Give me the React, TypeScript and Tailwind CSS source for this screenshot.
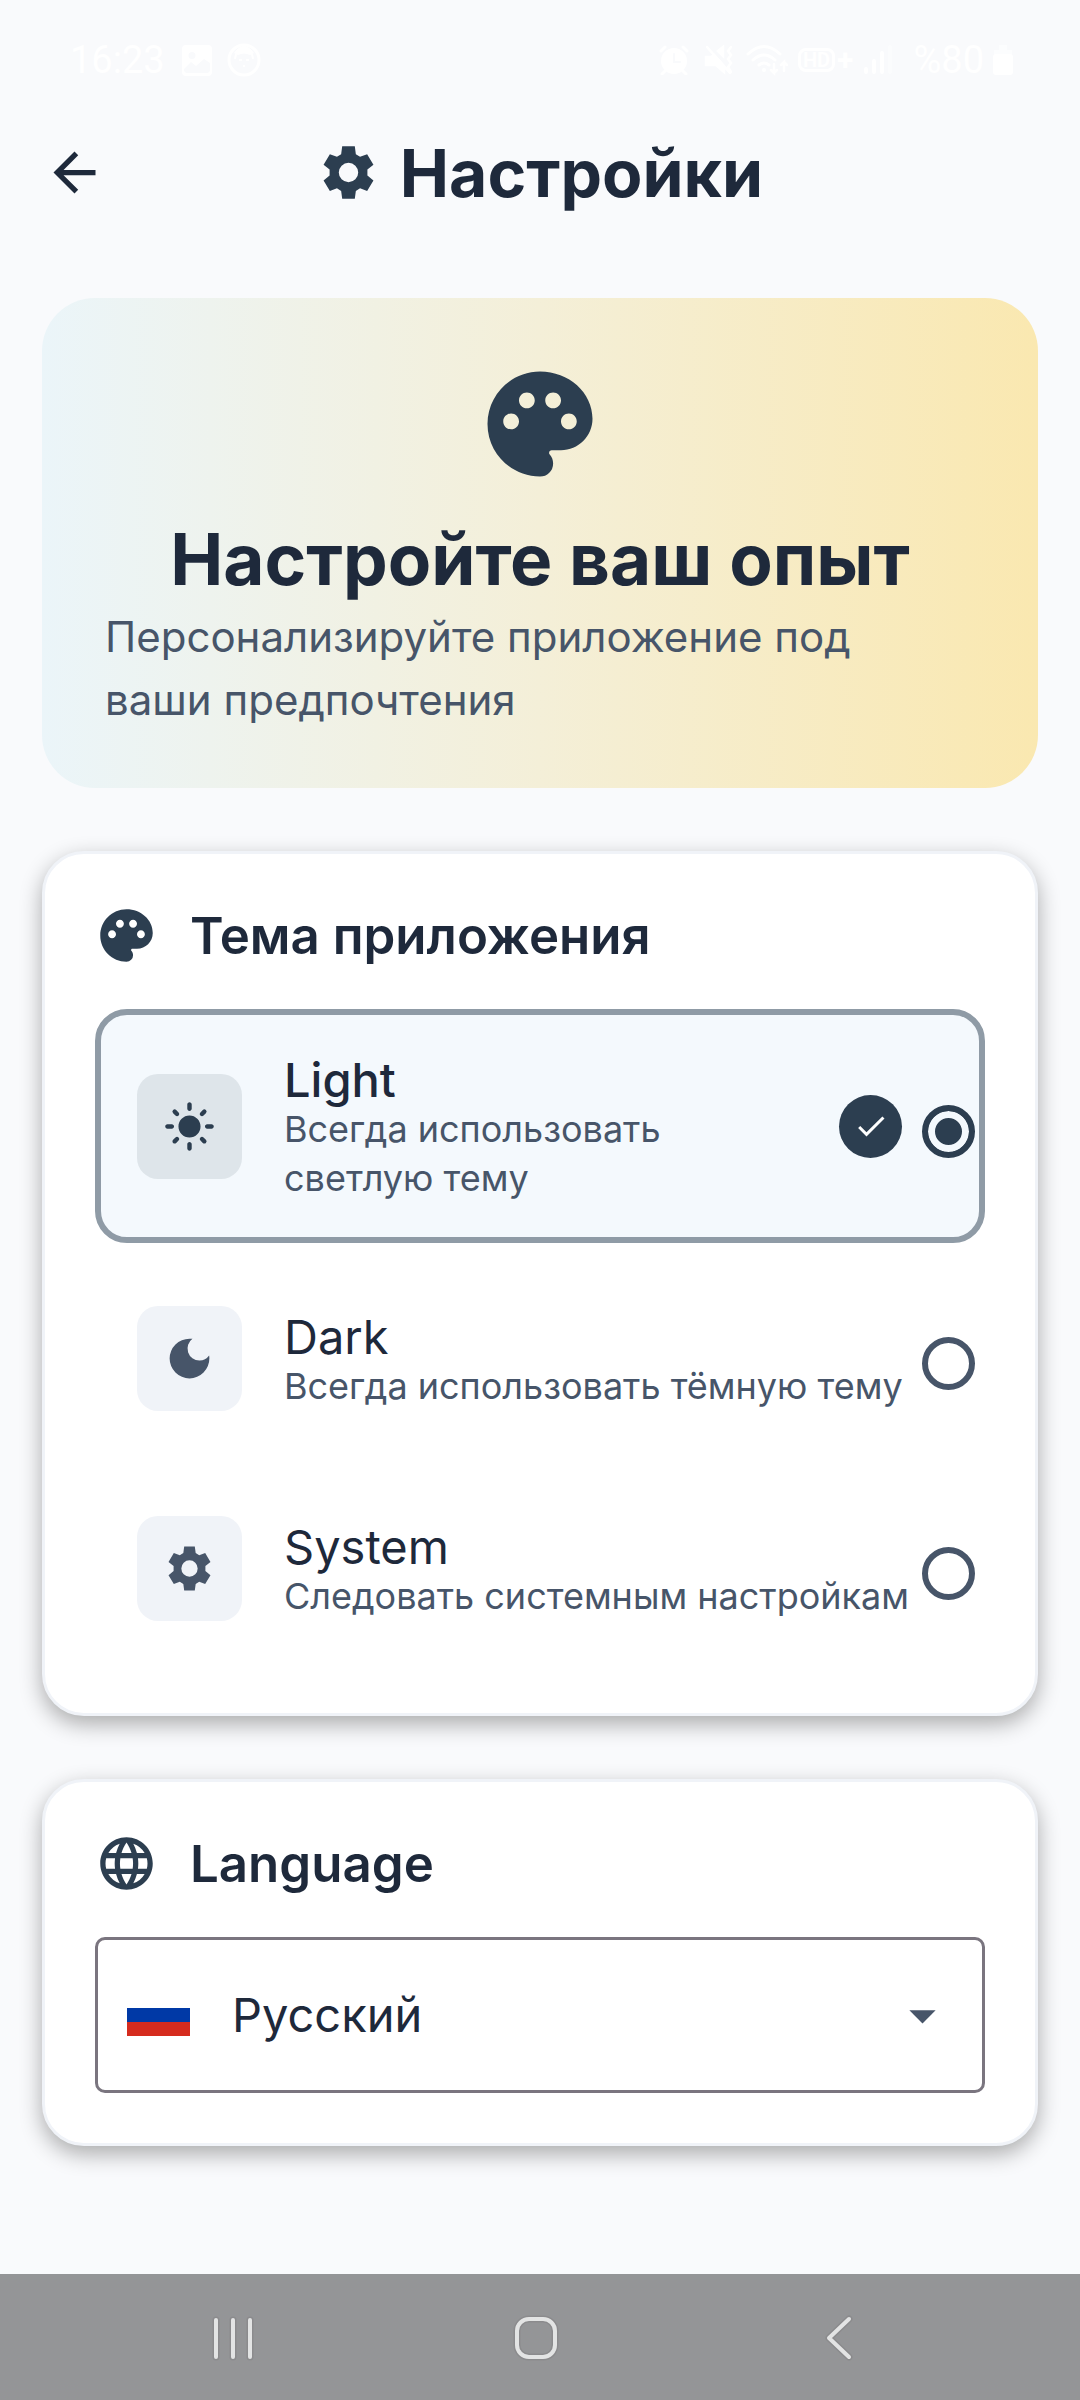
import { useState } from "react";
import type { ReactNode } from "react";
import {
  MdArrowDropDown,
  MdCheck,
  MdDarkMode,
  MdLanguage,
  MdLightMode,
  MdPalette,
} from "react-icons/md";

function Gear({ className }: { className: string }) {
  return (
    <svg viewBox="0 0 24 24" className={className} fill="currentColor" aria-hidden="true">
      <path
        fillRule="evenodd"
        d="M9.600 2L14.400 2L14.800 5L16.400 6L19.100 5L21.500 9L19.200 10.900L19.200 13.100L21.500 15L19.100 19L16.400 18L14.800 19L14.400 22L9.600 22L9.200 19L7.600 18L4.900 19L2.500 15L4.800 13.100L4.800 10.900L2.500 9L4.900 5L7.600 6L9.200 5zM12 8.300a3.700 3.700 0 1 0 0 7.400 3.700 3.700 0 0 0 0-7.400z"
      />
    </svg>
  );
}

function StatusBar() {
  return (
    <div className="flex h-[120px] items-center justify-between pl-[70px] pr-[66px] font-['Roboto',sans-serif] text-[38px] leading-none text-white">
      <div className="flex items-center">
        <span>16:23</span>
        <svg className="ml-4 h-8 w-8" viewBox="0 0 32 32" fill="none" aria-hidden="true">
          <path fillRule="evenodd" fill="currentColor" d="M5 1h22a4 4 0 0 1 4 4v23a4 4 0 0 1-4 4H5a4 4 0 0 1-4-4V5a4 4 0 0 1 4-4zM11 8a3.500 3.500 0 1 0 0 7 3.500 3.500 0 0 0 0-7zM3 25v2l2 2h22l2-2v-8l-6-4-8 7-5-4z" />
        </svg>
        <svg className="ml-3.5 h-[34px] w-[34px]" viewBox="0 0 34 34" fill="none" stroke="currentColor" strokeWidth="3" aria-hidden="true">
          <circle cx="17" cy="17" r="15" />
          <path fill="currentColor" stroke="none" d="M7 10Q17-4 27 10l-4 2q-6-3-12 0z" />
          <path strokeWidth="2" d="M8 16l1-5M26 16l-1-5M12 17h3M19 17h3M16 23h2" />
        </svg>
      </div>
      <div className="flex items-center">
        <svg className="h-[30px] w-[30px]" viewBox="0 0 30 30" fill="none" stroke="currentColor" strokeWidth="3" strokeLinecap="round" aria-hidden="true">
          <circle cx="15" cy="16" r="13" fill="currentColor" stroke="none" />
          <path d="M2 6l4-4M28 6l-4-4M6 26l-3 3M24 26l3 3" />
          <path stroke="#f9fafc" strokeWidth="2" d="M15 9v8h6" />
        </svg>
        <svg className="ml-[15px] h-[30px] w-[30px]" viewBox="0 0 30 30" fill="none" stroke="currentColor" strokeWidth="2.500" strokeLinecap="round" aria-hidden="true">
          <path fill="currentColor" d="M2 12h5l3-2 10 11v6l-8-7H2zM14 6l5-4v9z" />
          <path d="M3 2l23 26M27 2l-3 4 3 4-3 4 3 4-3 4 3 5" />
        </svg>
        <svg className="ml-3 h-8 w-[42px]" viewBox="0 0 42 32" fill="none" stroke="currentColor" strokeWidth="3" strokeLinecap="round" aria-hidden="true">
          <path d="M2 10Q18-5 34 10M7 16q11-10 22 0M13 21q5-4 10 0" />
          <circle cx="18" cy="26" r="2" fill="currentColor" stroke="none" />
          <path strokeWidth="2.500" d="M28 20v9l-3-3M28 29l3-3M38 27v-9l-3 3M38 18l3 3" />
        </svg>
        <span className="ml-2.5 flex h-6 items-center rounded-lg border-3 border-white px-0.5 text-[20px] font-bold leading-none">HD</span>
        <span className="ml-0.5 text-[30px] font-bold leading-none">+</span>
        <svg className="ml-2.5 h-[30px] w-[30px]" viewBox="0 0 30 30" stroke="currentColor" strokeWidth="4" strokeLinecap="round" aria-hidden="true">
          <path d="M3 24v3M11 16v11M19 8v19" />
          <path opacity=".4" d="M27 2v25" />
        </svg>
        <span className="ml-5">%80</span>
        <svg className="ml-2 h-[30px] w-[22px]" viewBox="0 0 22 30" fill="currentColor" aria-hidden="true">
          <path opacity=".5" d="M7 0h8v5h5v5H2V5h5z" />
          <rect x="1" y="9" width="20" height="21" rx="3" />
        </svg>
      </div>
    </div>
  );
}

function Card({ icon, title, children }: { icon: ReactNode; title: string; children: ReactNode }) {
  return (
    <section className="rounded-[42px] border-3 border-[#f0f3f8] bg-white p-[50px] shadow-[0_8px_22px_rgba(0,0,0,0.32)]">
      <h2 className="mb-[42px] flex h-[63px] items-center gap-8 text-[51px] font-semibold leading-none text-[#1e293b]">
        <span className="text-[#2c3e50]">{icon}</span>
        {title}
      </h2>
      {children}
    </section>
  );
}

const themes = [
  { id: "light", name: "Light", text: "Всегда использовать светлую тему", icon: <MdLightMode className="size-[53px]" /> },
  { id: "dark", name: "Dark", text: "Всегда использовать тёмную тему", icon: <MdDarkMode className="size-[53px]" /> },
  { id: "system", name: "System", text: "Следовать системным настройкам", icon: <Gear className="size-[53px]" /> },
];

function ThemeOptions() {
  const [theme, setTheme] = useState("light");
  return (
    <div className="flex flex-col gap-[21px]">
      {themes.map((t) => {
        const on = t.id === theme;
        return (
          <label
            key={t.id}
            className={`flex min-h-[189px] items-center rounded-[32px] border-6 py-[34px] pl-9 pr-1 ${
              on ? "border-[#8f9ba6] bg-[#f4f9fd]" : "border-transparent"
            }`}
          >
            <span
              className={`grid size-[105px] shrink-0 place-items-center rounded-[21px] ${
                on ? "bg-[#dee5ea] text-[#2c3e50]" : "bg-[#f0f3f8] text-[#475569]"
              }`}
            >
              {t.icon}
            </span>
            <span className="ml-[42px] min-w-0 flex-1 pt-1.5">
              <span className={`block text-[47px] leading-[50px] text-[#1e293b] ${on ? "font-medium" : "font-normal"}`}>
                {t.name}
              </span>
              <span className="block text-[36px] leading-[49px] text-[#475569]">{t.text}</span>
            </span>
            {on && (
              <span className="ml-5 mr-2 grid size-[63px] place-items-center rounded-full bg-[#2c3e50] text-white">
                <MdCheck className="size-9" />
              </span>
            )}
            <input
              type="radio"
              name="theme"
              checked={on}
              onChange={() => setTheme(t.id)}
              className="ml-3 mt-2.5 size-[53px] shrink-0 appearance-none rounded-full border-6 border-[#475569] checked:border-[#2c3e50] checked:bg-[#2c3e50] checked:shadow-[inset_0_0_0_7px_#f4f9fd]"
            />
          </label>
        );
      })}
    </div>
  );
}

function LanguageSelect() {
  return (
    <div className="relative flex h-[156px] items-center rounded-[10px] border-3 border-[#7a757f]">
      <span className="pointer-events-none absolute left-[29px] flex h-[42px] w-[63px] flex-col" aria-hidden="true">
        <span className="flex-1 bg-white" />
        <span className="flex-1 bg-[#0039a6]" />
        <span className="flex-1 bg-[#d52b1e]" />
      </span>
      <select
        aria-label="Language"
        className="h-full w-full appearance-none bg-transparent pl-[134px] pr-24 text-[47px] text-[#1e293b]"
        defaultValue="ru"
      >
        <option value="ru">Русский</option>
        <option value="en">English</option>
      </select>
      <MdArrowDropDown className="pointer-events-none absolute right-7 size-[63px] text-[#475569]" />
    </div>
  );
}

function NavIcon({ d }: { d: string }) {
  return (
    <svg className="size-[50px]" viewBox="0 0 50 50" fill="none" strokeLinecap="round" strokeLinejoin="round" aria-hidden="true">
      <path d={d} stroke="#8b8b8d" strokeWidth="7" />
      <path d={d} stroke="#e3e4e4" strokeWidth="4" />
    </svg>
  );
}

export default function App() {
  return (
    <div className="flex min-h-screen flex-col bg-[#f9fafc] font-['Inter',sans-serif]">
      <StatusBar />
      <header className="grid h-[105px] grid-cols-[63px_1fr_63px] items-center px-[43px]">
        <button type="button" aria-label="Назад" className="text-[#1e293b]">
          <svg viewBox="0 0 24 24" className="size-[63px]" fill="currentColor" aria-hidden="true">
            <path d="M20 11H7.830l5.590-5.590L12 4l-8 8 8 8 1.410-1.410L7.830 13H20v-2z" />
          </svg>
        </button>
        <h1 className="flex items-center justify-center gap-5 text-[66px] font-bold leading-none text-[#1e293b]">
          <Gear className="size-[63px] text-[#2c3e50]" />
          Настройки
        </h1>
      </header>
      <main className="flex flex-1 flex-col gap-[63px] px-[42px] pb-[128px] pt-[73px]">
        <section className="rounded-[53px] bg-linear-to-r from-[#ebf5f9] via-[#f4efd8] to-[#fae8b0] px-[63px] pb-[57px] pt-[63px]">
          <MdPalette className="mx-auto size-[126px] text-[#2c3e50]" />
          <h2 className="mb-[11px] mt-[37px] text-center text-[71px] font-bold leading-[70px] text-[#1e293b]">Настройте ваш опыт</h2>
          <p className="pr-4 text-[42px] leading-[63px] text-[#475569]">Персонализируйте приложение под ваши предпочтения</p>
        </section>
        <Card icon={<MdPalette className="size-[63px]" />} title="Тема приложения">
          <ThemeOptions />
        </Card>
        <Card icon={<MdLanguage className="size-[63px]" />} title="Language">
          <LanguageSelect />
        </Card>
      </main>
      <nav className="grid h-[126px] grid-cols-3 place-items-center bg-[#949597] pl-[82px] pr-[90px]">
        <button type="button" aria-label="Недавние">
          <NavIcon d="M8 8v37M25 8v37M42 8v37" />
        </button>
        <button type="button" aria-label="Домой">
          <NavIcon d="M18 7h14a12 12 0 0 1 12 12v14a12 12 0 0 1-12 12H18A12 12 0 0 1 6 33V19A12 12 0 0 1 18 7z" />
        </button>
        <button type="button" aria-label="Назад, система">
          <NavIcon d="M35 7L15 26l20 19" />
        </button>
      </nav>
    </div>
  );
}
